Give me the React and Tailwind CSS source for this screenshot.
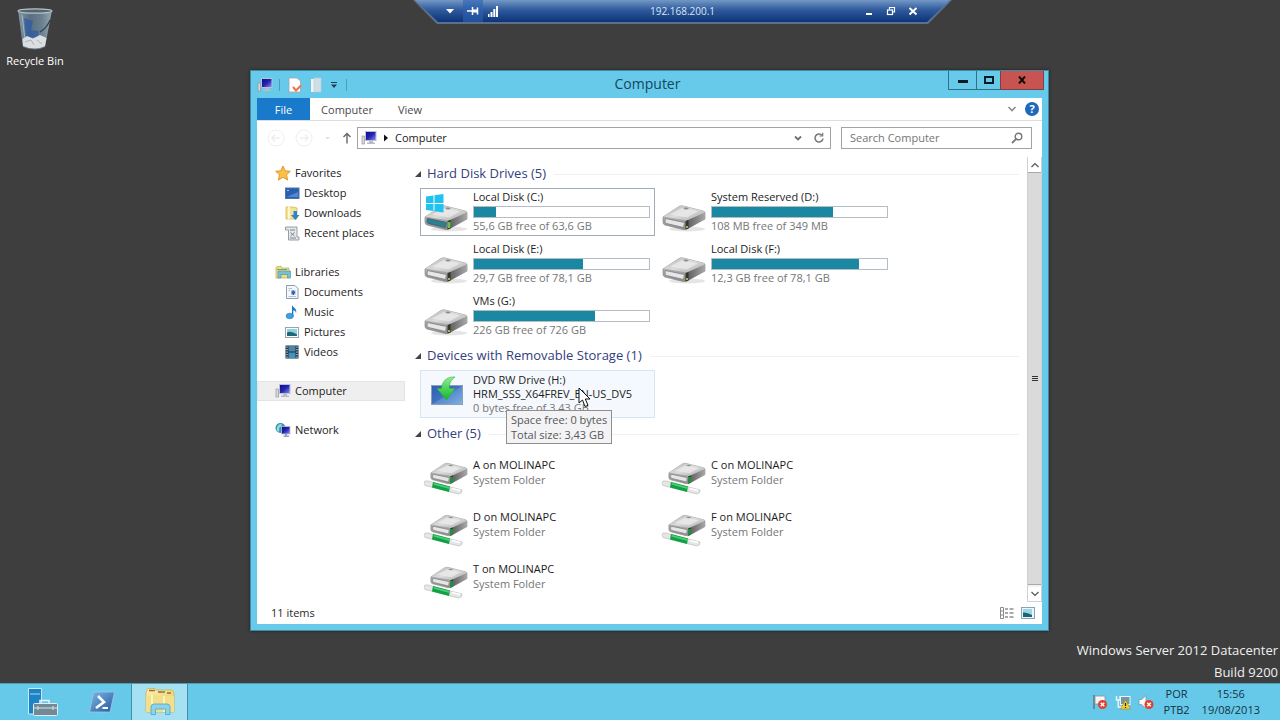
import React from "react";

function SharedDefs() {
  return (
    <svg width="0" height="0" className="absolute" aria-hidden="true">
      <defs>
        <linearGradient id="driveTop" x1="0" y1="0" x2="1" y2="1">
          <stop offset="0" stopColor="#b4b4b4" />
          <stop offset="0.5" stopColor="#dcdcdc" />
          <stop offset="1" stopColor="#a9a9a9" />
        </linearGradient>
        <linearGradient id="driveFront" x1="0" y1="0" x2="0" y2="1">
          <stop offset="0" stopColor="#d2d2d2" />
          <stop offset="1" stopColor="#8a8a8a" />
        </linearGradient>
        <linearGradient id="driveSide" x1="0" y1="0" x2="1" y2="0">
          <stop offset="0" stopColor="#5c5c5c" />
          <stop offset="1" stopColor="#a8a8a8" />
        </linearGradient>
        <linearGradient id="screenBlue" x1="0" y1="0" x2="1" y2="1">
          <stop offset="0" stopColor="#2f62b8" />
          <stop offset="1" stopColor="#7fb0e4" />
        </linearGradient>
        <linearGradient id="monitorNavy" x1="0" y1="0" x2="1" y2="1">
          <stop offset="0" stopColor="#0a0a86" />
          <stop offset="0.5" stopColor="#2424b4" />
          <stop offset="1" stopColor="#8f95e6" />
        </linearGradient>
        <linearGradient id="greenArrow" x1="0" y1="0" x2="0" y2="1">
          <stop offset="0" stopColor="#8df08a" />
          <stop offset="1" stopColor="#12b52c" />
        </linearGradient>
        <linearGradient id="binGlass" x1="0" y1="0" x2="1" y2="0">
          <stop offset="0" stopColor="#8ba2b2" />
          <stop offset="0.35" stopColor="#5c7488" />
          <stop offset="0.7" stopColor="#6f8798" />
          <stop offset="1" stopColor="#a3b3bd" />
        </linearGradient>
        <linearGradient id="folderYellow" x1="0" y1="0" x2="1" y2="1">
          <stop offset="0" stopColor="#fbf3b4" />
          <stop offset="1" stopColor="#e6c85a" />
        </linearGradient>
        <linearGradient id="psBlue" x1="0" y1="0" x2="1" y2="1">
          <stop offset="0" stopColor="#7fb6e4" />
          <stop offset="1" stopColor="#22599f" />
        </linearGradient>
      </defs>
    </svg>
  );
}

function DriveBody() {
  return (
    <>
      <path d="M1 15 L17 4.500 Q19 3.500 21 4 L41 9 Q43 9.500 43 11 L43 17 L25 27 Q23 28 21 27.500 L3 23 Q1 22.500 1 20 Z" fill="url(#driveFront)" stroke="#8c8c8c" strokeWidth="0.700" />
      <path d="M1.500 14.500 L17 4.500 Q19 3.500 21 4 L41 9 Q43 9.500 42 10.500 L25 18.500 Z" fill="url(#driveTop)" />
      <path d="M8 12.500 L20 6 L36 9.500 L25 15.500 Z" fill="#ededed" opacity="0.700" />
      <path d="M25 18.500 L43 10.500 L43 17 L25 27 Z" fill="url(#driveSide)" />
      <path d="M3.500 16.500 L22.500 20.500 L21.500 25.500 L4.500 21.500 Q3 21 3 19 Z" fill="#e6e6e6" stroke="#808080" strokeWidth="0.800" />
      <path d="M23.500 19 L26.500 18 L26.500 26.500 L23.500 27.500 Z" fill="#34352c" />
      <rect x="24" y="24" width="2" height="2" fill="#a9b646" />
      <ellipse cx="24" cy="6.500" rx="2.500" ry="0.900" fill="#8f8f8f" />
    </>
  );
}

function DriveIcon() {
  return (
    <svg viewBox="0 0 44 44" className="size-11 shrink-0 overflow-visible" aria-hidden="true">
      <ellipse cx="24" cy="39" rx="18" ry="2.500" fill="#000" opacity="0.100" />
      <g transform="translate(-1 12)"><DriveBody /></g>
    </svg>
  );
}

function SystemDriveIcon() {
  return (
    <svg viewBox="0 0 44 44" className="size-11 shrink-0 overflow-visible" aria-hidden="true">
      <ellipse cx="24" cy="39" rx="18" ry="2.500" fill="#000" opacity="0.100" />
      <g transform="translate(-1 12)">
        <DriveBody />
        <path d="M3.500 16.500 L22.500 20.500 L21.500 25.500 L4.500 21.500 Q3 21 3 19 Z" fill="#2d7f93" stroke="#3f5f68" strokeWidth="0.800" />
        <rect x="23.500" y="20" width="3" height="5" fill="#5ac84b" />
      </g>
      <path transform="translate(0 2)" d="M1 4.500 L8.500 3.500 V11 H1 Z M9.500 3.300 L18.500 2 V11 H9.500 Z M1 12 H8.500 V19 L1 18 Z M9.500 12 H18.500 V20.500 L9.500 19.200 Z" fill="#1fc3f0" />
    </svg>
  );
}

function NetworkDriveIcon() {
  return (
    <svg viewBox="0 0 44 44" className="size-11 shrink-0 overflow-visible" aria-hidden="true">
      <path d="M0 31 Q-1.500 33.500 0 35.500 L34 44 Q37.500 43.500 37 40 L3 31 Z" fill="#e6e6e6" stroke="#bdbdbd" strokeWidth="0.700" />
      <path d="M8 32 L25 36.500 L24 42 L7 37.500 Z" fill="#12a044" />
      <path d="M9 33 L25 37.300 L24.500 39 L8.500 34.500 Z" fill="#4ad27a" />
      <path d="M27 38.500 L35 40.500" stroke="#fff" strokeWidth="1.500" />
      <g transform="translate(5 10) scale(0.860)"><DriveBody /></g>
      <rect x="25" y="27" width="3" height="6" fill="#1d8f43" />
    </svg>
  );
}

function DvdIcon() {
  return (
    <svg viewBox="0 0 44 44" className="size-11 shrink-0" aria-hidden="true">
      <rect x="6.500" y="13.500" width="31" height="19" fill="url(#screenBlue)" stroke="#8d9eb6" />
      <path d="M7 32 V14 H37 Z" fill="#2c5cab" opacity="0.500" />
      <path d="M30 5 C21 4.500 17 10 16.500 16.500 H12 L21.500 28 L30 16.500 H24.500 C24 11 26 8 30 5 Z" fill="url(#greenArrow)" stroke="#2fae3a" strokeWidth="0.600" />
    </svg>
  );
}

function ComputerIcon() {
  return (
    <svg viewBox="0 0 16 16" className="size-4 shrink-0" aria-hidden="true">
      <rect x="1" y="6" width="2.500" height="8" fill="#d9d9d9" stroke="#8a8a8a" strokeWidth="0.600" />
      <rect x="4.500" y="1.500" width="10.500" height="9" fill="url(#monitorNavy)" stroke="#b9c0d4" />
      <path d="M8 11 H12 V12.500 H14 V14 H6 V12.500 H8 Z" fill="#b8bcc8" />
    </svg>
  );
}

const sideIcons = {
  star: (
    <path d="M8 1 L10.200 5.800 L15.300 6.300 L11.500 9.800 L12.600 15 L8 12.300 L3.400 15 L4.500 9.800 L0.700 6.300 L5.800 5.800 Z" fill="#fbc04a" stroke="#e08b1c" strokeWidth="0.900" />
  ),
  desktop: (
    <>
      <rect x="1.500" y="3" width="13.500" height="10.500" fill="#2860ae" stroke="#5276a8" />
      <path d="M3 12 H14 V7 Z" fill="#5189d2" />
      <rect x="3" y="5" width="2" height="1" fill="#a9cdf2" />
    </>
  ),
  downloads: (
    <>
      <path d="M2 2 H9 L13 3 V14 H2 Z" fill="#f4e291" stroke="#d3b95c" strokeWidth="0.800" />
      <path d="M5 1.500 V14" stroke="#fdf7cf" strokeWidth="2" />
      <path d="M9.500 6 H13 V10 H15.500 L11.300 15 L7 10 H9.500 Z" fill="#2f82d2" />
    </>
  ),
  recent: (
    <>
      <path d="M1.500 2 H13 V12 H15 V15 H4.500 V5 H1.500 Z" fill="#e4e6e9" stroke="#8f949b" strokeWidth="0.900" />
      <path d="M6 5 H11 M6.500 7.500 L10.500 11 M10.500 7.500 L6.500 11 M6 13 H12" stroke="#7b8794" strokeWidth="1" />
    </>
  ),
  libraries: (
    <>
      <path d="M1 3 L6 2 L7 4 H14 V14 H1 Z" fill="#efdb84" stroke="#c9ac4e" strokeWidth="0.700" />
      <path d="M3 7 H15.500 V14 H12.500 V10.500 H6 V14 H3 Z" fill="#77bfd2" stroke="#4d9bb0" strokeWidth="0.700" />
      <path d="M2 5.500 H12" stroke="#5fae6a" />
    </>
  ),
  documents: (
    <>
      <path d="M2.500 1.500 H11 L14 4.500 V14.500 H2.500 Z" fill="#f4f7fc" stroke="#8f9cb0" />
      <path d="M4.500 4.500 H8 M4.500 6.500 H6 M4.500 12.500 H12" stroke="#b4c0d2" />
      <path d="M7 6.500 H11.500 V10.500 H7 Z" fill="#86a6d8" />
      <path d="M8 8.500 H11 M9.250 6.500 V11" stroke="#2f5aa8" strokeWidth="1.400" />
    </>
  ),
  music: (
    <>
      <path d="M8 1 C9 4 13.500 4 12 9.500 C12 7 10.500 6.500 9.300 6.500 V12 H8 Z" fill="#1f78c0" />
      <ellipse cx="5.800" cy="12" rx="3.700" ry="2.800" fill="#3f9fdc" stroke="#1f78c0" strokeWidth="0.600" />
    </>
  ),
  pictures: (
    <>
      <rect x="1.500" y="3.500" width="13" height="10" fill="#fff" stroke="#97a5ab" />
      <rect x="3" y="5" width="10" height="7" fill="#8fd0e4" />
      <path d="M3 8.500 Q7 6.500 13 10.500 V12 H3 Z" fill="#1e6678" />
    </>
  ),
  videos: (
    <>
      <rect x="1.500" y="1.500" width="13" height="13" fill="#1d3446" />
      <rect x="4.500" y="2" width="7" height="5.500" fill="#4f83a8" />
      <rect x="4.500" y="8.500" width="7" height="5.500" fill="#4790ba" />
      <path d="M3 2.500 V14 M13 2.500 V14" stroke="#dbe7ee" strokeWidth="1.200" strokeDasharray="1.200 1.300" />
    </>
  ),
  network: (
    <>
      <circle cx="5.500" cy="6" r="5" fill="#2f93ba" />
      <path d="M2 5 Q4 1 7 2.500 Q6 5 4 6 Q5 9 3 10 Q1 8 2 5 Z" fill="#9ad9cf" />
      <rect x="6.500" y="4.500" width="8.500" height="7.500" fill="url(#monitorNavy)" stroke="#b9c0d4" strokeWidth="0.800" />
      <path d="M10 12 H12 V13.500 H14 V15 H8.500 V13.500 H10 Z" fill="#9da3b5" />
    </>
  ),
};

function SideIcon({ name }) {
  if (name === "computer") return <ComputerIcon />;
  return (
    <svg viewBox="0 0 16 16" className="size-4 shrink-0" fill="none" aria-hidden="true">
      {sideIcons[name]}
    </svg>
  );
}

function ConnectionBar() {
  return (
    <header className="absolute top-0 left-[413px] h-6 w-[539px] bg-[#5d6f8c] [clip-path:polygon(0_0,100%_0,calc(100%-24px)_100%,24px_100%)]">
      <div className="grid h-[22px] grid-cols-[1fr_auto_1fr] items-center bg-linear-to-b from-[#7398c5] via-[#2f5a9c] via-45% to-[#0c3478] pr-8 pl-8 text-white [clip-path:polygon(2px_0,calc(100%-2px)_0,calc(100%-25px)_100%,25px_100%)]">
        <div className="flex items-center">
          <button aria-label="Menu" className="flex h-5 w-[18px] items-center">
            <svg viewBox="0 0 8 5" className="ml-px h-[5px] w-2"><path d="M0 0 H8 L4 4.500 Z" fill="#fff" /></svg>
          </button>
          <button aria-label="Pin" className="flex h-[22px] w-5 items-center justify-center bg-[#2d63b3]/60">
            <svg viewBox="0 0 12 10" className="h-2.5 w-3" fill="none" stroke="#fff"><path d="M0 5 H5 M5.500 1 V9 M10.500 1.500 V8.500" strokeWidth="1.500" /><path d="M6 5 H10" strokeWidth="3" /></svg>
          </button>
          <svg viewBox="0 0 12 12" className="ml-1 size-3" fill="#fff" aria-hidden="true"><rect x="1" y="9" width="1.500" height="3" /><rect x="3.500" y="7" width="2" height="5" /><rect x="6.300" y="4" width="2" height="8" /><rect x="9" y="1" width="2" height="11" /></svg>
        </div>
        <span className="text-[10px] leading-4 text-[#dbe6f5]">192.168.200.1</span>
        <div className="flex items-center justify-end gap-2">
          <button aria-label="Minimize" className="flex size-3.5 items-center justify-center">
            <svg viewBox="0 0 10 10" className="size-2.5"><path d="M2 7 H8 V9 H2 Z" fill="#fff" /></svg>
          </button>
          <button aria-label="Restore" className="flex size-3.5 items-center justify-center">
            <svg viewBox="0 0 10 10" className="size-2.5" fill="none" stroke="#fff"><path d="M3.500 3.500 V1.500 H8.500 V6 H6.500" strokeWidth="1.200" /><rect x="1.500" y="4" width="5" height="4.500" strokeWidth="1.200" /></svg>
          </button>
          <button aria-label="Close" className="flex size-3.5 items-center justify-center">
            <svg viewBox="0 0 10 10" className="size-2.5"><path d="M1.500 2 L8.500 8.500 M8.500 2 L1.500 8.500" stroke="#fff" strokeWidth="2" /></svg>
          </button>
        </div>
      </div>
    </header>
  );
}

function RecycleBin() {
  return (
    <a href="#recycle-bin" className="absolute top-1.5 left-0 flex w-[70px] flex-col items-center text-[11px] leading-4 text-white">
      <svg viewBox="0 0 44 46" className="mb-px h-[46px] w-11" aria-hidden="true">
        <path d="M5 4 L10 41 Q22 46 32 41 L39 4 Z" fill="url(#binGlass)" opacity="0.900" />
        <path d="M11 12 L20 15 L18 24 L26 25 L25 31 L13 32 Z" fill="#2656a8" opacity="0.650" />
        <path d="M9.500 33 L14 30 L20 32.500 L27 29 L33.500 32 L32 40 Q22 45 10 40 Z" fill="#dcdfe1" />
        <path d="M12 36 L18 34 L21 39 M24 34 L29 38" stroke="#a9b2ba" fill="none" />
        <ellipse cx="22" cy="5" rx="17" ry="2.200" fill="#55646e" stroke="#b7c1c8" strokeWidth="1.200" />
        <path d="M9 9 L12.500 38" stroke="#cbd7de" strokeWidth="1" opacity="0.600" />
        <path d="M37 14 Q34 22 27 26" stroke="#2f4150" strokeWidth="1.200" fill="none" />
      </svg>
      Recycle Bin
    </a>
  );
}

function TitleBar() {
  return (
    <div className="grid h-[27px] grid-cols-[1fr_auto_1fr] pr-1 pl-1.5">
      <div className="flex items-center pt-px">
        <ComputerIcon />
        <span className="mx-1.5 h-3 w-px bg-[#4b9fbd]" />
        <button aria-label="Properties" className="mr-2 ml-0.5">
          <svg viewBox="0 0 14 16" className="h-4 w-3.5"><path d="M1 1 H9 L12.500 4 V15 H1 Z" fill="#fdfdfd" stroke="#a5a5a5" strokeWidth="0.800" /><path d="M5 10 L8 13.500 L13 8.500" fill="none" stroke="#e8794d" strokeWidth="2.200" /></svg>
        </button>
        <button aria-label="New folder" className="mr-2">
          <svg viewBox="0 0 12 16" className="h-4 w-3"><path d="M1 2 H5 V15 H1 Z" fill="#eef3f6" /><path d="M4 1 H11 V15 H4 Z" fill="#cfdde4" stroke="#bccdd6" strokeWidth="0.600" /></svg>
        </button>
        <button aria-label="Customize Quick Access Toolbar" className="mr-2">
          <svg viewBox="0 0 8 8" className="size-2"><path d="M1 1 H7 V2 H1 Z M1 3.500 H7 L4 7 Z" fill="#1c4150" /></svg>
        </button>
        <span className="h-3 w-px bg-[#4b9fbd]" />
      </div>
      <h1 className="pr-1.5 text-sm leading-[26px] text-[#11485d]">Computer</h1>
      <div className="flex h-[19px] items-stretch justify-end">
        <button aria-label="Minimize" className="flex w-7 items-center justify-center border-b border-l border-[#2f6f88]">
          <svg viewBox="0 0 10 10" className="size-2.5"><path d="M0 5 H10 V8 H0 Z" fill="#0c1a22" /></svg>
        </button>
        <button aria-label="Maximize" className="flex w-6 items-center justify-center border-b border-l border-[#2f6f88]">
          <svg viewBox="0 0 10 8" className="h-2 w-2.5"><path d="M1 1 H9 V7 H1 Z" fill="none" stroke="#0c1a22" strokeWidth="2" /></svg>
        </button>
        <button aria-label="Close" className="flex w-11 items-center justify-center border border-t-0 border-[#7c4145] bg-[#c75450]">
          <svg viewBox="0 0 8 8" className="size-2"><path d="M1 0.500 L7 7.500 M7 0.500 L1 7.500" stroke="#170808" strokeWidth="2" /></svg>
        </button>
      </div>
    </div>
  );
}

function Ribbon() {
  return (
    <div className="flex h-[23px] items-stretch border-b border-[#dcdddf] text-[11px] text-[#4a4a4a]">
      <button className="w-[53px] bg-[#1979ca] pt-0.5 text-white">File</button>
      <button className="w-[74px] pt-0.5">Computer</button>
      <button className="w-[52px] pt-0.5">View</button>
      <div className="ml-auto flex items-center gap-2 pr-[3px]">
        <button aria-label="Expand the Ribbon">
          <svg viewBox="0 0 10 10" className="size-2.5"><path d="M1.500 3 L5 6.500 L8.500 3" fill="none" stroke="#8d8d8d" strokeWidth="1.600" /></svg>
        </button>
        <button aria-label="Help" className="size-3.5 rounded-full bg-[#1f68bd] text-[11px] leading-[14px] font-bold text-white">?</button>
      </div>
    </div>
  );
}

function AddressRow() {
  return (
    <div className="flex items-start pt-1.5 pr-2.5 pb-1.5 pl-2.5 text-[11px]">
      <div className="mr-1 flex h-[22px] items-center gap-2.5">
        <button aria-label="Back">
          <svg viewBox="0 0 18 18" className="size-[18px]" fill="none" stroke="#efefef"><circle cx="9" cy="9" r="8" /><path d="M13 9 H5 M8 5.500 L4.800 9 L8 12.500" strokeWidth="1.500" /></svg>
        </button>
        <button aria-label="Forward">
          <svg viewBox="0 0 18 18" className="size-[18px]" fill="none" stroke="#efefef"><circle cx="9" cy="9" r="8" /><path d="M5 9 H13 M10 5.500 L13.200 9 L10 12.500" strokeWidth="1.500" /></svg>
        </button>
        <svg viewBox="0 0 8 8" className="size-2" aria-hidden="true"><path d="M2 3 H7 L4.500 5.500 Z" fill="#e0e0e0" /></svg>
        <button aria-label="Up">
          <svg viewBox="0 0 12 12" className="size-3" fill="none" stroke="#666" strokeWidth="1.400"><path d="M6 11.500 V1.500 M2.500 5 L6 1.500 L9.500 5" /></svg>
        </button>
      </div>
      <div className="mr-2.5 flex h-[22px] flex-1 items-center border border-[#a3a3a3] pr-[5px] pl-[3px]">
        <ComputerIcon />
        <svg viewBox="0 0 6 8" className="mx-1.5 h-2 w-1.5" aria-hidden="true"><path d="M1 0.500 L5 4 L1 7.500 Z" fill="#111" /></svg>
        <a href="#computer" className="flex-1 text-[#1c1c1c]">Computer</a>
        <button aria-label="Previous locations" className="mr-2.5">
          <svg viewBox="0 0 10 10" className="size-2.5"><path d="M2 3.500 L5 6.500 L8 3.500" fill="none" stroke="#6f6f6f" strokeWidth="1.800" /></svg>
        </button>
        <button aria-label="Refresh">
          <svg viewBox="0 0 12 12" className="size-3" fill="none" stroke="#777" strokeWidth="1.500"><path d="M9 3.300 A4 4 0 1 0 10 6.500" /><path d="M9.700 0.800 V4 H6.500" strokeWidth="1.200" /></svg>
        </button>
      </div>
      <label className="flex h-[22px] w-[191px] items-center border border-[#a3a3a3] pr-2 pl-2">
        <span className="sr-only">Search</span>
        <input type="text" placeholder="Search Computer" className="h-5 w-full min-w-0 flex-1 bg-transparent leading-5 outline-none placeholder:text-[#757575]" />
        <svg viewBox="0 0 12 12" className="size-3 shrink-0" fill="none" stroke="#777" strokeWidth="1.400" aria-hidden="true"><circle cx="7.500" cy="4.500" r="3.300" /><path d="M5.200 6.800 L1 11" strokeWidth="1.800" /></svg>
      </label>
    </div>
  );
}

const navGroups = [
  [
    { label: "Favorites", icon: "star", root: true },
    { label: "Desktop", icon: "desktop" },
    { label: "Downloads", icon: "downloads" },
    { label: "Recent places", icon: "recent" },
  ],
  [
    { label: "Libraries", icon: "libraries", root: true },
    { label: "Documents", icon: "documents" },
    { label: "Music", icon: "music" },
    { label: "Pictures", icon: "pictures" },
    { label: "Videos", icon: "videos" },
  ],
  [{ label: "Computer", icon: "computer", root: true, active: true }],
  [{ label: "Network", icon: "network", root: true }],
];

function Sidebar() {
  return (
    <nav className="flex w-[148px] shrink-0 flex-col gap-[19px] pt-2 text-[11px] text-[#1c1c1c]">
      {navGroups.map((group) => (
        <ul key={group[0].label}>
          {group.map((item) => (
            <li key={item.label}>
              <a
                href={"#" + item.label.toLowerCase().replace(" ", "-")}
                className={
                  "flex h-5 items-center gap-1 border " +
                  (item.root ? "pl-[17px] " : "pl-[26px] ") +
                  (item.active ? "border-[#e4e4e4] bg-[#efefef]" : "border-transparent")
                }
              >
                <SideIcon name={item.icon} />
                {item.label}
              </a>
            </li>
          ))}
        </ul>
      ))}
    </nav>
  );
}

function Group({ title, children }) {
  return (
    <section className="flex flex-col gap-[5px]">
      <h2 className="flex h-5 items-center pt-0.5 text-[13px] text-[#33407e]">
        <svg viewBox="0 0 8 8" className="mr-[5px] size-2" aria-hidden="true"><path d="M7 1 V7 H1 Z" fill="#444" /></svg>
        {title}
        <span className="ml-2 h-px flex-1 bg-[#f0f0f3]" />
      </h2>
      <div className="ml-1.5 grid grid-cols-[repeat(auto-fill,235px)] gap-x-[3px] gap-y-1">{children}</div>
    </section>
  );
}

function Tile({ icon, selected, hovered, children }) {
  return (
    <div
      tabIndex={0}
      className={
        "relative flex h-12 items-center gap-1 border px-1 text-[11px] leading-[14px] text-[#1c1c1c] " +
        (selected ? "border-[#a0adb8]" : hovered ? "border-[#d5e5f3] bg-[#f5f9fd]" : "border-transparent")
      }
    >
      {icon}
      <div className="min-w-0 flex-1">{children}</div>
    </div>
  );
}

const drives = [
  { name: "Local Disk (C:)", free: "55,6 GB free of 63,6 GB", used: 12.6, system: true },
  { name: "System Reserved (D:)", free: "108 MB free of 349 MB", used: 69 },
  { name: "Local Disk (E:)", free: "29,7 GB free of 78,1 GB", used: 62 },
  { name: "Local Disk (F:)", free: "12,3 GB free of 78,1 GB", used: 84 },
  { name: "VMs (G:)", free: "226 GB free of 726 GB", used: 69 },
];

const shares = ["A", "C", "D", "F", "T"];

function Content() {
  return (
    <main className="flex min-w-0 flex-1 flex-col gap-[5px] pt-2 pr-2 pb-0.5 pl-[9px]">
      <Group title="Hard Disk Drives (5)">
        {drives.map((d) => (
          <Tile key={d.name} selected={d.system} icon={d.system ? <SystemDriveIcon /> : <DriveIcon />}>
            <p>{d.name}</p>
            <div className="mt-0.5 mb-px h-3 border border-[#b4bcc4] bg-white" role="meter" aria-label={d.name} aria-valuemin={0} aria-valuemax={100} aria-valuenow={d.used}>
              <div className="h-full bg-[#1a87a3]" style={{ width: d.used + "%" }} />
            </div>
            <p className="pb-px text-[#767676]">{d.free}</p>
          </Tile>
        ))}
      </Group>
      <Group title="Devices with Removable Storage (1)">
        <Tile hovered icon={<DvdIcon />}>
          <p>DVD RW Drive (H:)</p>
          <p className="whitespace-nowrap">HRM_SSS_X64FREV_EN-US_DV5</p>
          <p className="text-[#767676]">0 bytes free of 3,43 GB</p>
          <div role="tooltip" className="absolute top-[39px] left-[85px] z-10 border border-[#8f8f8f] bg-[#f3f3f6] px-1 py-px text-[11px] leading-[15px] whitespace-nowrap text-[#575757]">
            <p>Space free: 0 bytes</p>
            <p>Total size: 3,43 GB</p>
          </div>
          <svg viewBox="0 0 14 22" className="absolute top-4 left-[157px] z-20 h-[22px] w-3.5" aria-hidden="true"><path d="M1 1 V16 L4.500 13 L7 19.500 L10 18.300 L7.300 12 H12 Z" fill="#fff" stroke="#111" /></svg>
        </Tile>
      </Group>
      <Group title="Other (5)">
        {shares.map((s) => (
          <Tile key={s} icon={<NetworkDriveIcon />}>
            <p className="leading-[15px]">{s} on MOLINAPC</p>
            <p className="leading-[15px] text-[#767676]">System Folder</p>
          </Tile>
        ))}
      </Group>
    </main>
  );
}

function ScrollBar() {
  return (
    <div className="mt-0.5 flex w-[15px] shrink-0 flex-col border-x border-[#d0d0d0] bg-[#f3f3f3]">
      <button aria-label="Scroll up" className="flex h-[15px] items-center justify-center bg-white">
        <svg viewBox="0 0 8 8" className="size-2"><path d="M0.500 6 L4 2.500 L7.500 6" fill="none" stroke="#555" strokeWidth="1.200" /></svg>
      </button>
      <div className="flex flex-1 flex-col items-center justify-center gap-px border-y border-[#a8a8a8] bg-[#dadada]">
        <span className="h-px w-1.5 bg-[#333]" />
        <span className="h-px w-1.5 bg-[#333]" />
        <span className="h-px w-1.5 bg-[#333]" />
      </div>
      <button aria-label="Scroll down" className="mt-0.5 flex h-[15px] items-center justify-center border-b border-[#d0d0d0] bg-white">
        <svg viewBox="0 0 8 8" className="size-2"><path d="M0.500 2 L4 5.500 L7.500 2" fill="none" stroke="#555" strokeWidth="1.200" /></svg>
      </button>
    </div>
  );
}

function StatusBar() {
  return (
    <div className="flex h-[22px] items-center pr-[7px] pl-3.5 text-[11px] text-[#2a2a2a]">
      11 items
      <div className="ml-auto flex items-center gap-1.5">
        <button aria-label="Details view">
          <svg viewBox="0 0 16 12" className="h-3 w-4" fill="none"><path d="M1.500 0.500 H4.500 V11.500 H1.500 Z M1.500 4 H4.500 M1.500 8 H4.500" stroke="#8a8a8a" /><path d="M6 2 H9 M6 6 H9 M6 10 H9 M10.500 2 H14.500 M10.500 6 H14.500 M10.500 10 H14.500" stroke="#555" /></svg>
        </button>
        <button aria-label="Large icons view">
          <svg viewBox="0 0 14 12" className="h-3 w-3.5"><rect x="0.500" y="0.500" width="13" height="11" fill="#eaf6fa" stroke="#85a5b0" /><rect x="2" y="2" width="9" height="8" fill="#9dd6e6" /><path d="M2 5.500 Q6 5 11 8 V10 H2 Z" fill="#1d6377" /></svg>
        </button>
      </div>
    </div>
  );
}

function ExplorerWindow() {
  return (
    <section className="absolute top-[70px] left-[250px] w-[799px] border border-[#3f8ba6] bg-[#68caea] shadow-[0_0_3px_rgba(0,0,0,0.5)]">
      <TitleBar />
      <div className="mx-1.5 mb-1.5 bg-white">
        <Ribbon />
        <AddressRow />
        <div className="flex">
          <Sidebar />
          <Content />
          <ScrollBar />
        </div>
        <StatusBar />
      </div>
    </section>
  );
}

function Taskbar() {
  return (
    <footer className="flex h-[37px] items-stretch border-t border-[#4f9db8] bg-[#66c9ea] pr-5 pl-3.5 text-[11px] leading-4 text-[#15323e]">
      <button aria-label="Server Manager" className="flex w-[58px] items-center justify-center">
        <svg viewBox="0 0 32 32" className="size-8"><path d="M1.500 2.500 H14.500 V28 H1.500 Z" fill="#1b83c6" stroke="#c8ecf8" /><path d="M3 8 H13" stroke="#a8dcf2" /><path d="M13 17 V14.500 H22 V17" fill="none" stroke="#e8f6fb" strokeWidth="1.500" /><rect x="6.500" y="17.500" width="24" height="12" rx="1" fill="#738994" stroke="#d8f0f8" /><path d="M7 22 H30 M11 20 V24 M26 20 V24" stroke="#d8e6ec" /></svg>
      </button>
      <button aria-label="PowerShell" className="flex w-[59px] items-center justify-center">
        <svg viewBox="0 0 28 24" className="h-6 w-7"><path d="M5.500 2 H26.500 L22 22 H1.500 Z" fill="url(#psBlue)" stroke="#9fc8e8" strokeWidth="0.800" /><path d="M10 6 L16 12 L8 18" fill="none" stroke="#fff" strokeWidth="2.600" /><path d="M14.500 18 H20" stroke="#fff" strokeWidth="2" /></svg>
      </button>
      <button aria-label="File Explorer" className="flex w-[57px] items-center justify-center border-x border-[#3f92ae] bg-[#a5e0f3]">
        <svg viewBox="0 0 34 30" className="h-[30px] w-[34px]"><path d="M3 5 L5 1.500 H12 L13 3 H29 L31 6 V25 H3 Z" fill="url(#folderYellow)" stroke="#cfae4a" strokeWidth="0.800" /><path d="M6 3.500 H10 M15 5 H19 M24 6 H28" stroke="#c4553a" strokeWidth="1.500" /><path d="M10 3.500 H12 M19 5 H22" stroke="#3f9e51" strokeWidth="1.500" /><path d="M3 8.500 L12 7.500 L14 9 H31 V25 H3 Z" fill="#f2df8c" /><path d="M9 8 V25 M21 9 V25" stroke="#fbf3b8" strokeWidth="2" /><path d="M8 27.500 V20 Q8 17 11 17 H24 Q27 17 27 20 V27.500 H22.500 V22 H12.500 V27.500 Z" fill="#8cd3ea" stroke="#4aa4c6" strokeWidth="0.800" /></svg>
      </button>
      <div className="ml-auto flex items-center">
        <div className="flex gap-[7px]">
          <svg viewBox="0 0 16 16" className="size-4" role="img" aria-label="Action Center"><path d="M2 1 V15" stroke="#5f6e75" strokeWidth="1.300" /><path d="M3 2 H13 V10 H3 Z" fill="#f6f6f6" stroke="#85949b" strokeWidth="0.800" /><circle cx="10.500" cy="10.500" r="4.500" fill="#e0402f" /><path d="M8.700 8.700 L12.300 12.300 M12.300 8.700 L8.700 12.300" stroke="#fff" strokeWidth="1.400" /></svg>
          <svg viewBox="0 0 16 16" className="size-4" role="img" aria-label="Network"><path d="M1.500 2 V6 H5 V2 M3.200 6 V13 H8" fill="none" stroke="#f5f5f5" strokeWidth="1.400" /><rect x="5.500" y="2.500" width="9.500" height="8" fill="#6f99a8" stroke="#f5f5f5" /><path d="M10.500 6 L15.500 15 H5.500 Z" fill="#f8cf2c" stroke="#a98710" strokeWidth="0.600" /><path d="M10.500 9 V12 M10.500 13 V14" stroke="#222" strokeWidth="1.200" /></svg>
          <svg viewBox="0 0 16 16" className="size-4" role="img" aria-label="Volume muted"><path d="M1 5.500 H3.500 L8 1.500 V14.500 L3.500 10.500 H1 Z" fill="#fafafa" stroke="#7f979f" strokeWidth="0.800" /><circle cx="11" cy="10.500" r="4.500" fill="#e0402f" /><path d="M9.200 8.700 L12.800 12.300 M12.800 8.700 L9.200 12.300" stroke="#fff" strokeWidth="1.400" /></svg>
        </div>
        <button className="ml-2.5 text-center"><span className="block">POR</span><span className="block">PTB2</span></button>
        <button className="ml-3 text-center"><span className="block">15:56</span><span className="block">19/08/2013</span></button>
      </div>
    </footer>
  );
}

export default function App() {
  return (
    <div className="flex min-h-screen flex-col bg-[#3e3e3e] font-['Open_Sans','Noto_Sans',sans-serif]">
      <SharedDefs />
      <div className="relative flex flex-1 flex-col justify-end">
        <RecycleBin />
        <p className="pr-0.5 text-right text-[13px] leading-[22px] text-[#f0f0f0]">
          Windows Server 2012 Datacenter
          <br />
          Build 9200
        </p>
        <ExplorerWindow />
        <ConnectionBar />
      </div>
      <Taskbar />
    </div>
  );
}
